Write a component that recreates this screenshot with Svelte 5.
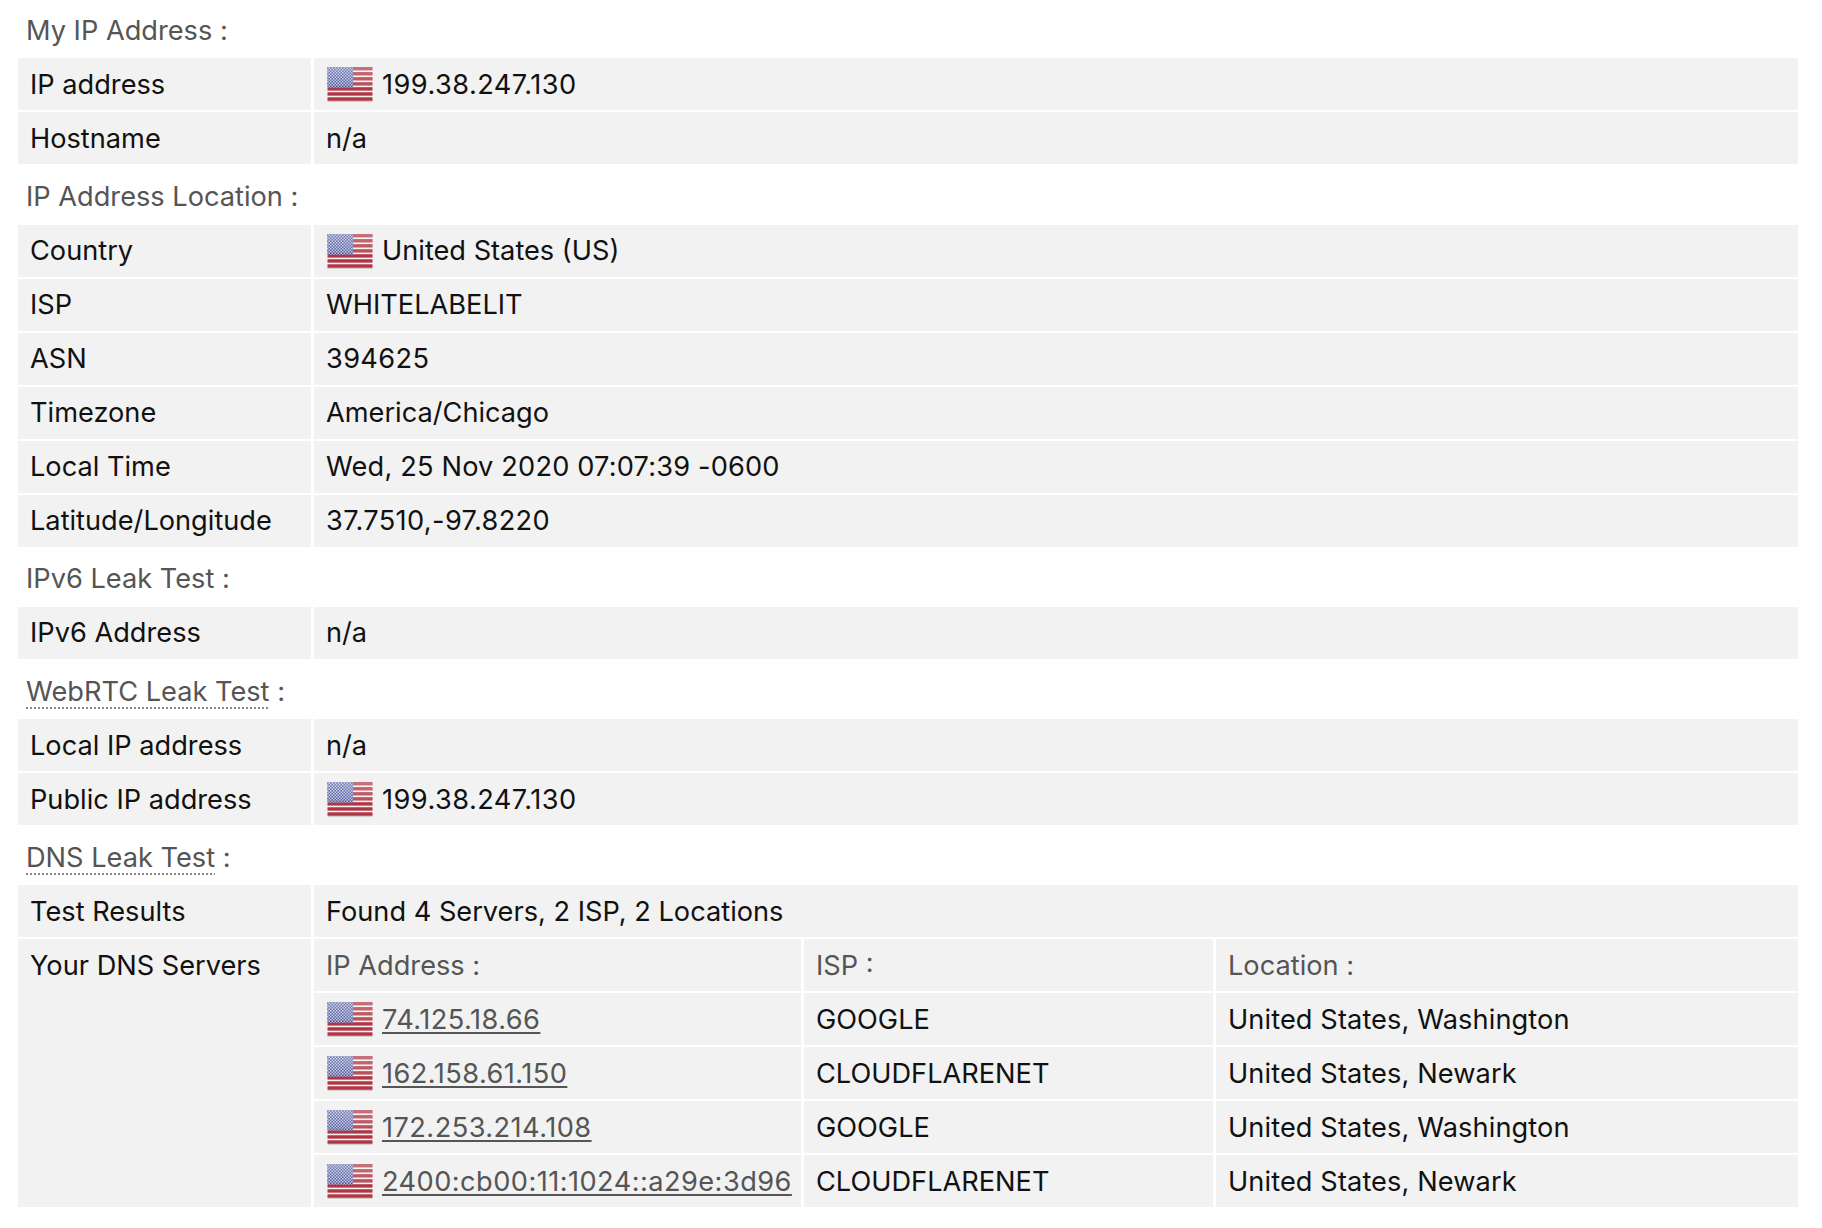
<script>
  const dns = [
    { ip: "74.125.18.66", isp: "GOOGLE", loc: "United States, Washington" },
    { ip: "162.158.61.150", isp: "CLOUDFLARENET", loc: "United States, Newark" },
    { ip: "172.253.214.108", isp: "GOOGLE", loc: "United States, Washington" },
    { ip: "2400:cb00:11:1024::a29e:3d96", isp: "CLOUDFLARENET", loc: "United States, Newark" },
  ];
  const stripes = [0, 1, 2, 3, 4, 5, 6];
</script>

{#snippet flag()}
  <svg class="flag" viewBox="0 0 46 36" width="46" height="36" aria-hidden="true">
    <defs>
      <pattern id="stars" width="3" height="3" patternUnits="userSpaceOnUse">
        <rect width="3" height="3" fill="#3f4b94" />
        <rect width="1.5" height="1.5" fill="#bcc0e0" />
        <rect x="1.5" y="1.5" width="1.5" height="1.5" fill="#bcc0e0" />
      </pattern>
      <linearGradient id="gloss" x1="0" y1="0" x2="0" y2="1">
        <stop offset="0" stop-color="#fff" stop-opacity="0.3" />
        <stop offset="0.55" stop-color="#fff" stop-opacity="0.12" />
        <stop offset="0.6" stop-color="#fff" stop-opacity="0" />
      </linearGradient>
    </defs>
    <rect y="34" x="0.5" width="45" height="2" fill="#d3cbcc" />
    <rect y="1" x="0.5" width="45" height="33" fill="#f6f1f1" />
    {#each stripes as i}
      <rect x="0.5" y={1 + i * 5.05} width="45" height="3.4" fill="#b03645" />
    {/each}
    <rect x="0.5" y="1" width="25.5" height="20.5" fill="url(#stars)" />
    <rect x="0.5" y="1" width="45" height="33" fill="url(#gloss)" />
  </svg>
{/snippet}

<main>
  <h3>My IP Address :</h3>
  <table>
    <tbody>
      <tr><th>IP address</th><td><span class="ip addr">{@render flag()}199.38.247.130</span></td></tr>
      <tr><th>Hostname</th><td>n/a</td></tr>
    </tbody>
  </table>

  <h3>IP Address Location :</h3>
  <table>
    <tbody>
      <tr><th>Country</th><td><span class="ip">{@render flag()}United States (US)</span></td></tr>
      <tr><th>ISP</th><td>WHITELABELIT</td></tr>
      <tr><th>ASN</th><td class="num">394625</td></tr>
      <tr><th>Timezone</th><td>America/Chicago</td></tr>
      <tr><th>Local Time</th><td class="time">Wed, 25 Nov 2020 07:07:39 -0600</td></tr>
      <tr><th>Latitude/Longitude</th><td class="num">37.7510,-97.8220</td></tr>
    </tbody>
  </table>

  <h3>IPv6 Leak Test :</h3>
  <table>
    <tbody>
      <tr><th>IPv6 Address</th><td>n/a</td></tr>
    </tbody>
  </table>

  <h3><span class="dotted">WebRTC Leak Test</span> :</h3>
  <table>
    <tbody>
      <tr><th>Local IP address</th><td>n/a</td></tr>
      <tr><th>Public IP address</th><td><span class="ip addr">{@render flag()}199.38.247.130</span></td></tr>
    </tbody>
  </table>

  <h3><span class="dotted">DNS Leak Test</span> :</h3>
  <table>
    <tbody>
      <tr><th>Test Results</th><td colspan="3">Found 4 Servers, 2 ISP, 2 Locations</td></tr>
      <tr>
        <th rowspan="5">Your DNS Servers</th>
        <td class="head c1">IP Address :</td>
        <td class="head c2">ISP :</td>
        <td class="head">Location :</td>
      </tr>
      {#each dns as row}
        <tr>
          <td class="c1"><span class="ip addr">{@render flag()}<a href="#top">{row.ip}</a></span></td>
          <td>{row.isp}</td>
          <td class="loc">{row.loc}</td>
        </tr>
      {/each}
    </tbody>
  </table>

  <h3>Flash Leak Test :</h3>
</main>

<style>
  :global(body) {
    background: #fff;
    overflow: hidden;
  }

  main {
    height: 1228px;
    overflow: hidden;
    padding: 0 24px 0 18px;
    font-family: Inter, "Liberation Sans", sans-serif;
    font-size: 27.2px;
    color: #111;
  }

  h3 {
    margin: 0;
    padding: 4px 0 0 8px;
    height: 56.3px;
    box-sizing: border-box;
    display: flex;
    align-items: center;
    font-size: 27.2px;
    font-weight: 400;
    color: #555;
    white-space: pre;
  }

  .dotted {
    text-decoration: underline dotted 2px #888;
    text-underline-offset: 7px;
  }

  table {
    width: 100%;
    border-collapse: separate;
    border-spacing: 0 2px;
    table-layout: auto;
  }

  th,
  td {
    height: 52px;
    padding: 0 12px;
    background: #f2f2f2;
    font-weight: 400;
    text-align: left;
    vertical-align: middle;
    white-space: nowrap;
    border-right: 3px solid #fff;
    box-sizing: border-box;
  }

  tr > :last-child {
    border-right: 0;
  }

  th {
    width: 296px;
    vertical-align: top;
    padding-top: 0.5px;
    line-height: 51.5px;
  }

  .head {
    color: #555;
  }

  .c1 {
    width: 490px;
    padding-right: 4px;
  }

  .c2 {
    width: 412px;
  }

  .ip {
    display: flex;
    align-items: center;
    gap: 9px;
  }

  .flag {
    margin-left: 1px;
  }

  .addr {
    letter-spacing: 0.45px;
  }

  .num {
    letter-spacing: 0.35px;
  }

  .time {
    letter-spacing: 0.17px;
  }

  .loc {
    letter-spacing: 0.1px;
  }

  a {
    color: #555;
    text-underline-offset: 3px;
  }
</style>
